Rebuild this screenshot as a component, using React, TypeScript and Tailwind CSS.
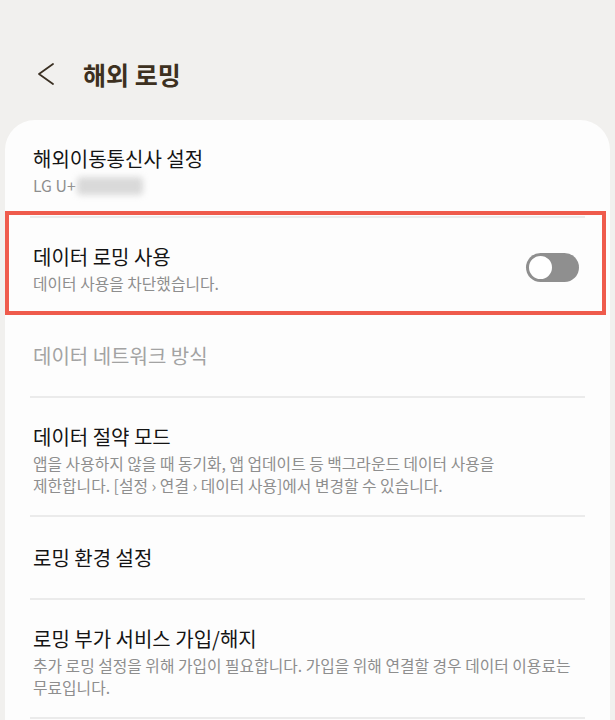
import React from 'react';

type Item = {
    title: string;
    sub?: React.ReactNode;
    disabled?: boolean;
    toggle?: boolean;
    highlight?: boolean;
    blurred?: boolean;
};

const items: Item[] = [
    { title: '해외이동통신사 설정', sub: 'LG U+', blurred: true },
    { title: '데이터 로밍 사용', sub: '데이터 사용을 차단했습니다.', toggle: true, highlight: true },
    { title: '데이터 네트워크 방식', disabled: true },
    {
        title: '데이터 절약 모드',
        sub: (
            <>
                앱을 사용하지 않을 때 동기화, 앱 업데이트 등 백그라운드 데이터 사용을
                <br />
                제한합니다. [설정 › 연결 › 데이터 사용]에서 변경할 수 있습니다.
            </>
        ),
    },
    { title: '로밍 환경 설정' },
    {
        title: '로밍 부가 서비스 가입/해지',
        sub: (
            <>
                추가 로밍 설정을 위해 가입이 필요합니다. 가입을 위해 연결할 경우 데이터 이용료는
                <br />
                무료입니다.
            </>
        ),
    },
];

const Toggle: React.FC = () => (
    <div className="relative w-[53px] h-[29px] rounded-full bg-[#8f8f8f] shrink-0">
        <div className="absolute left-[1px] top-[1px] w-[27px] h-[27px] rounded-full bg-white border-[2px] border-[#8f8f8f]" />
    </div>
);

const Row: React.FC<{ item: Item }> = ({ item }) => {
    const single = !item.sub;
    return (
        <div
            className={`relative flex items-center border-b-[2px] border-[#ebebeb] pl-[3px] pr-[6px] ${
                single ? 'py-[26px]' : 'pt-[24px] pb-[19px]'
            }`}
        >
            <div className="flex-1 min-w-0">
                <p
                    className={`text-[20px] leading-[29px] ${
                        item.disabled ? 'text-[#a3a3a3]' : 'text-[#141414]'
                    }`}
                >
                    {item.title}
                </p>
                {item.sub && (
                    <p className="mt-[2px] text-[15.8px] leading-[21.5px] text-[#8e8e8e] whitespace-nowrap flex items-center">
                        <span>{item.sub}</span>
                        {item.blurred && (
                            <span className="ml-[1px] inline-block w-[66px] h-[18px] rounded-[4px] bg-[#d9d9d9] blur-[3px]" />
                        )}
                    </p>
                )}
            </div>
            {item.toggle && <Toggle />}
            {item.highlight && (
                <div className="absolute left-[-25px] right-[-21px] top-[-7px] bottom-[-2px] border-[4px] border-[#ef5b4c] pointer-events-none" />
            )}
        </div>
    );
};

const App: React.FC = () => {
    return (
        <div
            className="w-full min-h-screen bg-[#f1f0ee] overflow-hidden"
            style={{ fontFamily: '"Noto Sans CJK KR", "Noto Sans", sans-serif' }}
        >
            <div className="h-[120px] flex items-start pt-[60px] pl-[37px]">
                <svg width="18" height="24" viewBox="0 0 18 24" className="mt-[2px]">
                    <polyline
                        points="16,2 2,12 16,22"
                        fill="none"
                        stroke="#3a2f22"
                        strokeWidth="1.8"
                        strokeLinecap="round"
                        strokeLinejoin="round"
                    />
                </svg>
                <h1 className="ml-[28px] text-[25px] leading-[28px] font-bold text-[#3d3020]">
                    해외 로밍
                </h1>
            </div>
            <div className="mx-[5px] bg-[#fdfdfd] rounded-t-[30px] px-[25px] min-h-[620px]">
                {items.map((item, i) => (
                    <Row key={i} item={item} />
                ))}
            </div>
        </div>
    );
};

export default App;
